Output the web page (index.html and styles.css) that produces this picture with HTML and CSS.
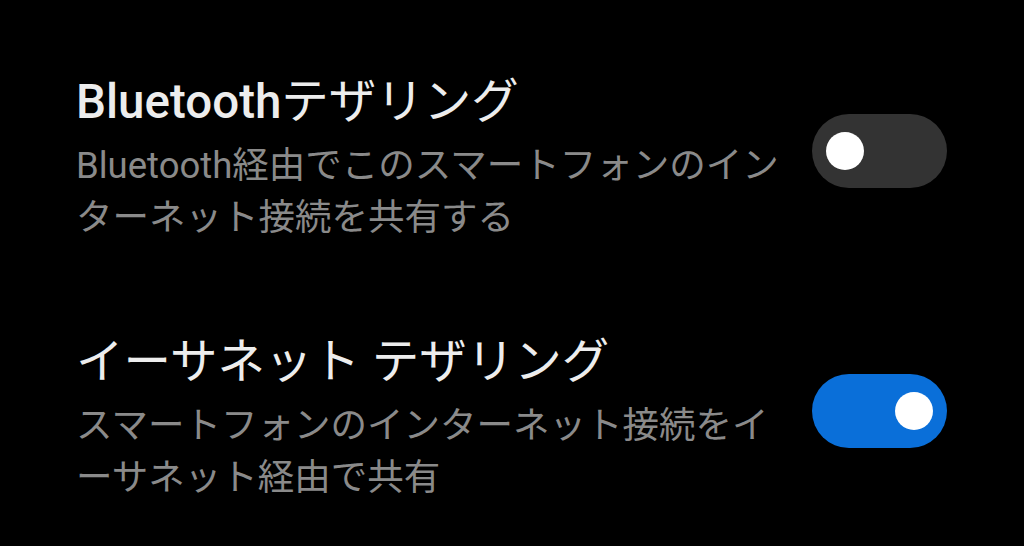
FILE: index.html
```html
<!DOCTYPE html>
<html lang="ja">
<head>
<meta charset="utf-8">
<title>テザリング</title>
<link rel="stylesheet" href="styles.css">
</head>
<body>
<ul class="settings">
  <li class="row">
    <div class="text">
      <div class="title"><span class="latin">Bluetooth</span>テザリング</div>
      <div class="summary">Bluetooth経由でこのスマートフォンのインターネット接続を共有する</div>
    </div>
    <div class="switch" role="switch" aria-checked="false"><span class="knob"></span></div>
  </li>
  <li class="row">
    <div class="text">
      <div class="title">イーサネット テザリング</div>
      <div class="summary">スマートフォンのインターネット接続をイーサネット経由で共有</div>
    </div>
    <div class="switch on" role="switch" aria-checked="true"><span class="knob"></span></div>
  </li>
</ul>
</body>
</html>
```

FILE: styles.css
```css
html, body {
  margin: 0;
  padding: 0;
  background: #000;
}

body {
  width: 1024px;
  height: 546px;
  overflow: hidden;
  font-family: Roboto, "Noto Sans CJK JP", sans-serif;
}

.settings {
  list-style: none;
  margin: 0;
  padding: 72px 77px 0 76px;
  display: flex;
  flex-direction: column;
  gap: 88px;
}

.row {
  display: flex;
  align-items: center;
  gap: 21px;
}

.text {
  width: 715px;
  flex: none;
}

.title {
  font-size: 47.5px;
  line-height: 60px;
  color: #ededed;
  font-weight: 400;
}

.title .latin {
  font-weight: 500;
}

.summary {
  margin-top: 8px;
  font-size: 36.5px;
  line-height: 52px;
  color: #8a8a8a;
  line-break: loose;
}

.switch {
  flex: none;
  width: 135px;
  height: 74px;
  border-radius: 37px;
  background: #333333;
  margin-bottom: 14px;
  display: flex;
  align-items: center;
  padding: 0 14px;
  box-sizing: border-box;
}

.switch .knob {
  width: 38px;
  height: 38px;
  border-radius: 50%;
  background: #fff;
}

.switch.on {
  background: #0a6fd9;
  justify-content: flex-end;
}
```
